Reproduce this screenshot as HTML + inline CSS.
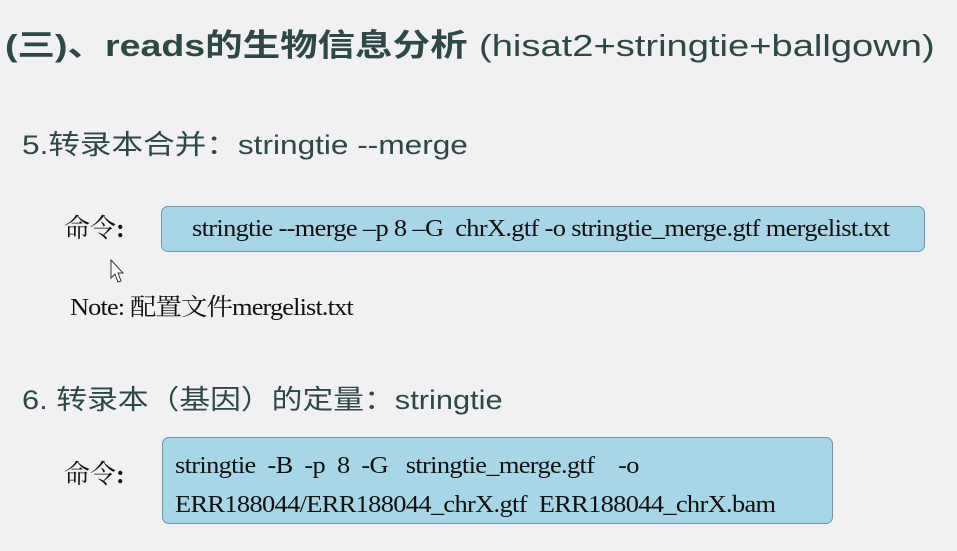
<!DOCTYPE html>
<html><head><meta charset="utf-8"><style>
body{margin:0;width:957px;height:551px;background:#f1f1f3;position:relative;overflow:hidden;font-family:"Liberation Sans","Noto Sans CJK SC",sans-serif;color:#2e4747}
.a{position:absolute;white-space:nowrap;transform-origin:0 50%}
.serif{font-family:"Liberation Serif","Noto Serif CJK SC",serif;color:#111}
.box{position:absolute;background:#a8d6e6;border:1.5px solid #6d98a6;border-radius:7px;box-sizing:border-box}
</style></head><body>
<div class="a" style="left:5px;top:26px;font-size:31px;line-height:40px;font-weight:bold;transform:scaleX(1.21)">(三)、reads的生物信息分析</div>
<div class="a" style="left:479px;top:26px;font-size:31px;line-height:40px;transform:scaleX(1.23)">(hisat2+stringtie+ballgown)</div>
<div class="a" style="left:22px;top:128px;font-size:27px;line-height:34px;transform:scaleX(1.17)">5.转录本合并：stringtie --merge</div>
<div class="a serif" style="left:64px;top:214px;font-size:26px;line-height:30px">命令<b>:</b></div>
<div class="box" style="left:161px;top:206px;width:764px;height:46px"></div>
<div class="a serif" style="left:192px;top:216px;font-size:24px;line-height:26px;letter-spacing:-0.6px;transform:scaleX(1.1)">stringtie --merge –p 8 –G&nbsp; chrX.gtf -o stringtie_merge.gtf mergelist.txt</div>
<svg class="a" style="left:110px;top:259px" width="16" height="26" viewBox="0 0 16 26"><path d="M1 1 L1 19 L5 15 L8 23 L11 22 L8 14 L13 14 Z" fill="#fff" stroke="#333" stroke-width="1"/></svg>
<div class="a serif" style="left:70px;top:294px;font-size:24px;line-height:28px;letter-spacing:-0.8px;transform:scaleX(1.1)">Note: 配置文件mergelist.txt</div>
<div class="a" style="left:22px;top:383px;font-size:27px;line-height:34px;transform:scaleX(1.14)">6. 转录本（基因）的定量：stringtie</div>
<div class="a serif" style="left:64px;top:460px;font-size:26px;line-height:30px">命令<b>:</b></div>
<div class="box" style="left:162px;top:437px;width:671px;height:87px"></div>
<div class="a serif" style="left:175px;top:453px;font-size:24px;line-height:26px;letter-spacing:-0.6px;transform:scaleX(1.1)">stringtie&nbsp; -B&nbsp; -p&nbsp; 8&nbsp; -G&nbsp;&nbsp; stringtie_merge.gtf&nbsp;&nbsp;&nbsp; -o</div>
<div class="a serif" style="left:175px;top:492px;font-size:24px;line-height:26px;letter-spacing:-0.6px;transform:scaleX(1.1)">ERR188044/ERR188044_chrX.gtf&nbsp; ERR188044_chrX.bam</div>
</body></html>
